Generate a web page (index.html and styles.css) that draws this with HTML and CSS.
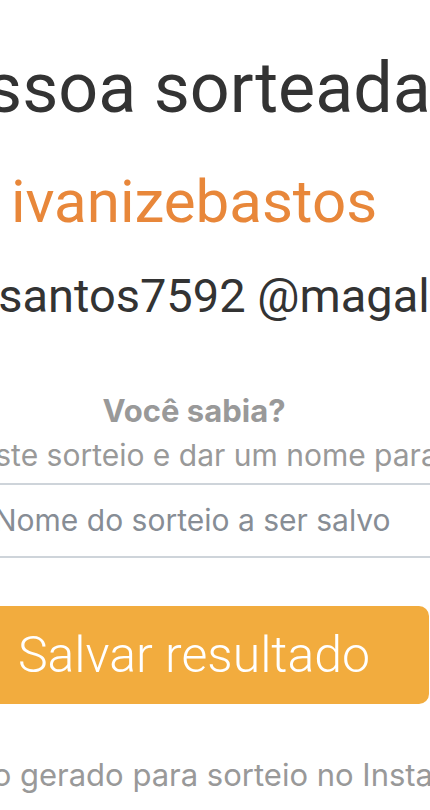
FILE: index.html
```html
<!DOCTYPE html>
<html lang="pt-BR">
<head>
    <meta charset="UTF-8">
    <meta name="viewport" content="width=device-width, initial-scale=1.0">
    <title>Resultado do sorteio</title>
    <link rel="stylesheet" href="styles.css">
</head>
<body>
    <main class="page">
        <h1 class="title">Pessoa sorteada</h1>
        <h2 class="winner">ivanizebastos</h2>
        <p class="mentions">@anasantos7592 @magali</p>

        <div class="tip">
            <h3 class="tip-title">Você sabia?</h3>
            <p class="tip-text">Você pode salvar o resultado deste sorteio e dar um nome para ele</p>
        </div>

        <form class="save-form">
            <input class="save-input" type="text" placeholder="Nome do sorteio a ser salvo">
            <button type="button" class="save-btn">Salvar resultado</button>
        </form>

        <p class="footer-note">Resultado gerado para sorteio no Instagram</p>
    </main>
</body>
</html>
```

FILE: styles.css
```css
body {
    margin: 0;
    padding: 0;
    overflow: hidden;
    background-color: #fff;
    font-family: Roboto, "Noto Sans", sans-serif;
}

.page {
    width: 1200px;
    margin-left: -406px;
    display: flex;
    flex-direction: column;
    align-items: center;
}

.title,
.winner,
.mentions,
.tip-title,
.tip-text,
.footer-note {
    margin: 0;
    white-space: nowrap;
    text-align: center;
    line-height: 1.2;
}

.title {
    margin-top: 46px;
    padding-right: 52px;
    font-size: 70px;
    font-weight: 400;
    color: #333;
}

.winner {
    margin-top: 36px;
    font-size: 60px;
    font-weight: 400;
    color: #e8873a;
}

.mentions {
    margin-top: 30px;
    padding-right: 68px;
    font-size: 47px;
    color: #333;
}

.tip {
    margin-top: 68px;
    display: flex;
    flex-direction: column;
    align-items: center;
    gap: 7px;
    font-family: Inter, "Liberation Sans", sans-serif;
    color: #999;
}

.tip-title {
    font-size: 31px;
    font-weight: 700;
}

.tip-text {
    padding-right: 362px;
    font-size: 30px;
    font-weight: 400;
}

.save-form {
    width: 480px;
    margin-top: 10px;
    display: flex;
    flex-direction: column;
    align-items: center;
}

.save-input {
    box-sizing: border-box;
    width: 100%;
    height: 75px;
    padding: 0 12px 0 38px;
    border: 2px solid #ced4da;
    font-family: Inter, "Liberation Sans", sans-serif;
    font-size: 30px;
    color: #495057;
    background: #fff;
    outline: none;
}

.save-input::placeholder {
    color: #878d95;
}

.save-btn {
    margin-top: 48px;
    width: 470px;
    height: 98px;
    border: none;
    border-radius: 10px;
    background-color: #f2ac3e;
    color: #fff;
    font-family: Roboto, sans-serif;
    font-weight: 300;
    font-size: 50px;
    cursor: pointer;
}

.footer-note {
    margin-top: 52px;
    padding-right: 14px;
    font-family: Inter, "Liberation Sans", sans-serif;
    font-size: 31px;
    color: #999;
}
```
